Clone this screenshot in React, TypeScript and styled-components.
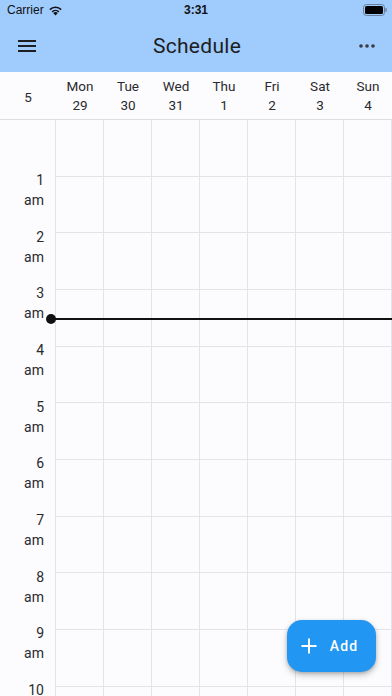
import React from "react";
import styled, { createGlobalStyle } from "styled-components";

const Global = createGlobalStyle`
  html, body { margin: 0; padding: 0; }
  body { font-family: Roboto, "Noto Sans", sans-serif; background: #fcfcff; overflow: hidden; }
`;

const HOUR = 56.67;
const COL = 48;
const TIMECOL = 56;

const Screen = styled.div`
  width: 392px;
  height: 696px;
  display: flex;
  flex-direction: column;
  overflow: hidden;
  background: #fcfcff;
  position: relative;
`;

const TopArea = styled.div`
  background: #9fcbfd;
  height: 72px;
  display: flex;
  flex-direction: column;
`;

const StatusBar = styled.div`
  height: 20px;
  display: flex;
  align-items: center;
  justify-content: space-between;
  padding: 0 5px 0 7px;
  font-family: "Liberation Sans", Arial, sans-serif;
  font-size: 12px;
  color: #111;
  position: relative;
`;

const StatusLeft = styled.div`
  display: flex;
  align-items: center;
  gap: 4px;
`;

const StatusTime = styled.div`
  position: absolute;
  left: 0;
  right: 0;
  text-align: center;
  font-weight: 700;
  font-size: 12px;
  pointer-events: none;
`;

const AppBar = styled.div`
  flex: 1;
  display: flex;
  align-items: center;
  justify-content: space-between;
  padding: 0 14px 0 16px;
`;

const Title = styled.div`
  font-family: Roboto, sans-serif;
  font-size: 21px;
  color: #1d1d22;
  letter-spacing: 0.3px;
`;

const IconBtn = styled.div`
  width: 22px;
  height: 22px;
  display: flex;
  align-items: center;
  justify-content: center;
`;

const HeaderRow = styled.div`
  height: 47px;
  display: flex;
  align-items: stretch;
  border-bottom: 1px solid #dedee2;
  background: #fcfcff;
  font-family: Roboto, sans-serif;
  color: #2a2a2e;
  font-size: 13.5px;
`;

const WeekNum = styled.div`
  width: ${TIMECOL}px;
  display: flex;
  align-items: center;
  justify-content: center;
  padding-top: 2px;
`;

const DayCell = styled.div`
  width: ${COL}px;
  display: flex;
  flex-direction: column;
  align-items: center;
  justify-content: center;
  line-height: 19px;
  padding-top: 1px;
`;

const Body = styled.div`
  flex: 1;
  display: flex;
  position: relative;
  overflow: hidden;
`;

const TimeCol = styled.div`
  width: ${TIMECOL}px;
  border-right: 1px solid #e4e4e8;
  box-sizing: border-box;
  display: flex;
  flex-direction: column;
  flex-shrink: 0;
`;

const HourLabelSlot = styled.div`
  height: ${HOUR}px;
  flex-shrink: 0;
  box-sizing: border-box;
  display: flex;
  flex-direction: column;
  align-items: flex-end;
  padding-right: 11px;
  padding-top: 50px;
  font-size: 14px;
  line-height: 20px;
  color: #2a2a2e;
  overflow: visible;
`;

const Days = styled.div`
  flex: 1;
  display: flex;
`;

const DayColumn = styled.div`
  width: ${COL}px;
  border-right: 1px solid #e4e4e8;
  box-sizing: border-box;
  display: flex;
  flex-direction: column;
  flex-shrink: 0;
`;

const HourCell = styled.div`
  height: ${HOUR}px;
  flex-shrink: 0;
  box-sizing: border-box;
  border-bottom: 1px solid #e4e4e8;
`;

const NowLine = styled.div`
  position: absolute;
  left: 51px;
  right: 0;
  height: 2px;
  background: #111;
  &::before {
    content: "";
    position: absolute;
    left: -5px;
    top: -4px;
    width: 10px;
    height: 10px;
    border-radius: 50%;
    background: #111;
  }
`;

const Fab = styled.button`
  position: absolute;
  left: 287px;
  top: 620px;
  width: 89px;
  height: 52px;
  border: none;
  border-radius: 15px;
  background: #2196f3;
  color: #fff;
  display: flex;
  align-items: center;
  justify-content: center;
  gap: 13px;
  padding: 0 4px 0 0;
  font-family: Roboto, sans-serif;
  font-size: 14px;
  letter-spacing: 1.1px;
  font-weight: 500;
  box-shadow: 0 3px 6px rgba(0, 0, 0, 0.25), 0 1px 3px rgba(0, 0, 0, 0.15);
`;

const days = [
  ["Mon", "29"],
  ["Tue", "30"],
  ["Wed", "31"],
  ["Thu", "1"],
  ["Fri", "2"],
  ["Sat", "3"],
  ["Sun", "4"],
];

const hours = Array.from({ length: 11 }, (_, i) => i);

export default function App() {
  const nowTop = (3 + 31 / 60) * HOUR - 1;
  return (
    <Screen>
      <Global />
      <TopArea>
        <StatusBar>
          <StatusLeft>
            <span>Carrier</span>
            <svg width="15" height="11" viewBox="0 0 15 11">
              <path d="M7.5 10.5 L5.2 8 A3.3 3.3 0 0 1 9.8 8 Z" fill="#111" />
              <path d="M3.6 6.3 A5.6 5.6 0 0 1 11.4 6.3 L10.3 7.4 A4 4 0 0 0 4.7 7.4 Z" fill="#111" />
              <path d="M1.3 4.1 A8.8 8.8 0 0 1 13.7 4.1 L12.6 5.2 A7.2 7.2 0 0 0 2.4 5.2 Z" fill="#111" />
            </svg>
          </StatusLeft>
          <StatusTime>3:31</StatusTime>
          <svg width="24" height="12" viewBox="0 0 24 12">
            <rect x="0.5" y="0.5" width="21" height="11" rx="3" fill="none" stroke="#6a7f99" strokeWidth="1" />
            <rect x="2" y="2" width="18" height="8" rx="1.6" fill="#000" />
            <rect x="22.3" y="4" width="1.4" height="4" rx="0.7" fill="#6a7f99" />
          </svg>
        </StatusBar>
        <AppBar>
          <IconBtn>
            <svg width="18" height="14" viewBox="0 0 18 14">
              <rect x="0" y="1" width="18" height="2" fill="#1d1d22" />
              <rect x="0" y="6" width="18" height="2" fill="#1d1d22" />
              <rect x="0" y="11" width="18" height="2" fill="#1d1d22" />
            </svg>
          </IconBtn>
          <Title>Schedule</Title>
          <IconBtn>
            <svg width="16" height="4" viewBox="0 0 16 4">
              <circle cx="2" cy="2" r="1.8" fill="#3a3a40" />
              <circle cx="8" cy="2" r="1.8" fill="#3a3a40" />
              <circle cx="14" cy="2" r="1.8" fill="#3a3a40" />
            </svg>
          </IconBtn>
        </AppBar>
      </TopArea>
      <HeaderRow>
        <WeekNum>5</WeekNum>
        {days.map(([d, n]) => (
          <DayCell key={d}>
            <span>{d}</span>
            <span>{n}</span>
          </DayCell>
        ))}
      </HeaderRow>
      <Body>
        <TimeCol>
          {hours.map((h) => (
            <HourLabelSlot key={h}>
              {h < 10 ? (
                <>
                  <span>{h + 1}</span>
                  <span>am</span>
                </>
              ) : null}
            </HourLabelSlot>
          ))}
        </TimeCol>
        <Days>
          {days.map(([d]) => (
            <DayColumn key={d}>
              {hours.map((h) => (
                <HourCell key={h} />
              ))}
            </DayColumn>
          ))}
        </Days>
        <NowLine style={{ top: nowTop }} />
      </Body>
      <Fab>
        <svg width="16" height="16" viewBox="0 0 16 16">
          <rect x="7" y="0.5" width="2" height="15" fill="#fff" />
          <rect x="0.5" y="7" width="15" height="2" fill="#fff" />
        </svg>
        <span>Add</span>
      </Fab>
    </Screen>
  );
}
